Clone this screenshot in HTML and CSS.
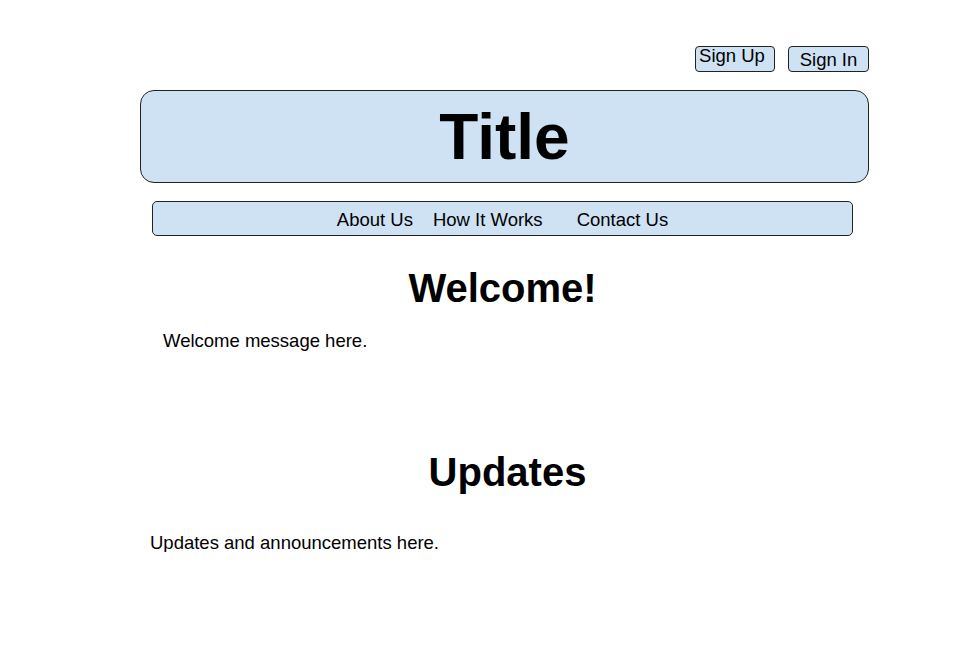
FILE: index.html
```html
<!DOCTYPE html>
<html>
<head>
<meta charset="utf-8">
<link rel="stylesheet" href="styles.css">
</head>
<body>
<div class="page">
  <div class="auth">
    <button class="btn btn-up">Sign Up</button>
    <button class="btn btn-in">Sign In</button>
  </div>
  <header class="title-box"><h1 class="title">Title</h1></header>
  <nav class="nav">
    <a class="nav-link nav-about">About Us</a>
    <a class="nav-link nav-how">How It Works</a>
    <a class="nav-link nav-contact">Contact Us</a>
  </nav>
  <section class="welcome">
    <h2 class="heading heading-welcome">Welcome!</h2>
    <p class="text text-welcome">Welcome message here.</p>
  </section>
  <section class="updates">
    <h2 class="heading heading-updates">Updates</h2>
    <p class="text text-updates">Updates and announcements here.</p>
  </section>
</div>
</body>
</html>
```
FILE: styles.css
```css
html, body { margin: 0; padding: 0; background: #fff; }
body { font-family: "Liberation Sans", Arial, sans-serif; color: #000; }
.page { width: 729px; margin-left: 140px; padding-top: 46px; }
.auth { display: flex; justify-content: flex-end; gap: 13px; }
.btn {
  box-sizing: border-box; height: 26px; padding: 0;
  background: #cfe2f3; border: 1px solid #222; border-radius: 4px;
  font-family: "Liberation Sans", Arial, sans-serif; font-size: 18.5px; color: #000;
  display: flex; justify-content: center; line-height: 1;
}
.btn-up { width: 80px; align-items: flex-start; padding: 0 6px 0 0; }
.btn-in { width: 81px; align-items: center; padding-top: 3px; }
.title-box {
  box-sizing: border-box; margin-top: 18px; height: 93px;
  background: #cfe2f3; border: 1px solid #222; border-radius: 14px;
  display: flex; align-items: center; justify-content: center;
}
.title { margin: 0; font-size: 64px; font-weight: bold; line-height: 1; }
.nav {
  box-sizing: border-box; margin: 18px 16px 0 12px; height: 35px;
  background: #cfe2f3; border: 1px solid #222; border-radius: 5px;
  display: flex; align-items: center; justify-content: center;
  font-size: 18.5px; padding-top: 3px;
}
.nav-link { color: #000; text-decoration: none; }
.nav-how { margin-left: 20px; }
.nav-contact { margin-left: 34px; }
.heading { margin: 0; text-align: center; font-weight: bold; font-size: 40px; line-height: 1; }
.welcome { padding-top: 32px; }
.heading-welcome { padding-right: 4px; }
.text { margin: 0; font-size: 18.5px; line-height: 1; }
.text-welcome { margin-top: 24px; padding-left: 23px; }
.updates { padding-top: 101px; }
.heading-updates { padding-left: 6px; }
.text-updates { margin-top: 42px; padding-left: 10px; }
```
